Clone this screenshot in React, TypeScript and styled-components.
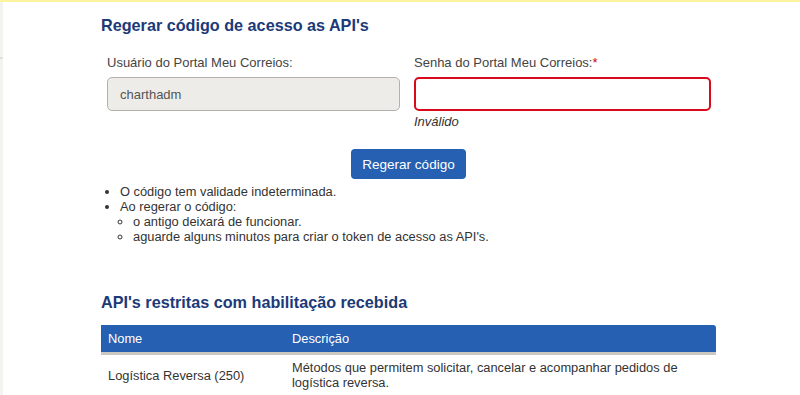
import styled, { createGlobalStyle } from "styled-components";

const GlobalStyle = createGlobalStyle`
  html, body {
    margin: 0;
    padding: 0;
    background: #ffffff;
    font-family: "Liberation Sans", Arial, sans-serif;
    color: #333333;
  }
`;

const Page = styled.div`
  display: flex;
  min-height: 395px;
  border-top: 2px solid #fcf3a0;
`;

const SideStrip = styled.aside`
  width: 3px;
  flex-shrink: 0;
  background: #f5f3ef;
  padding-top: 55px;
`;

const SideLine = styled.div`
  height: 2px;
  background: #e2dfda;
`;

const Content = styled.main`
  width: 615px;
  margin-left: 98px;
  padding-top: 12px;
`;

const SectionTitle = styled.h2`
  margin: 0;
  font-size: 16.2px;
  font-weight: bold;
  color: #1c3a78;
  line-height: 22px;
`;

const FormRow = styled.div`
  display: grid;
  grid-template-columns: 293px 297px;
  column-gap: 14px;
  padding: 0 6px;
  margin-top: 19px;
`;

const Field = styled.div`
  display: flex;
  flex-direction: column;
`;

const Label = styled.label`
  font-size: 13px;
  color: #444444;
  line-height: 16px;
  margin-bottom: 6px;
`;

const Required = styled.span`
  color: #d0021b;
`;

const Input = styled.div<{ $invalid?: boolean; $disabled?: boolean }>`
  box-sizing: border-box;
  height: 34px;
  border-radius: 5px;
  border: ${(p) => (p.$invalid ? "2px solid #d80a1c" : "1px solid #b4b1ac")};
  background: ${(p) => (p.$disabled ? "#eeece8" : "#ffffff")};
  padding: 0 12px;
  display: flex;
  align-items: center;
  font-size: 13px;
  color: #555555;
`;

const ErrorText = styled.span`
  font-size: 13px;
  font-style: italic;
  color: #333333;
  margin-top: 3px;
  line-height: 16px;
`;

const ButtonRow = styled.div`
  display: flex;
  justify-content: center;
  margin-top: 19px;
`;

const Button = styled.button`
  background: #2560b2;
  color: #ffffff;
  border: none;
  border-radius: 4px;
  height: 30px;
  padding: 0 11px;
  font-family: "Liberation Sans", Arial, sans-serif;
  font-size: 13.5px;
`;

const List = styled.ul<{ $nested?: boolean }>`
  margin: ${(p) => (p.$nested ? "0" : "5px 0 0 0")};
  padding-left: ${(p) => (p.$nested ? "13px" : "19px")};
  list-style-type: ${(p) => (p.$nested ? "circle" : "disc")};
  font-size: 12.85px;
  line-height: 15px;
  color: #333333;
`;

const Item = styled.li``;

const SecondTitle = styled(SectionTitle)`
  margin-top: 47px;
`;

const Table = styled.table`
  width: 100%;
  margin-top: 12px;
  border-collapse: collapse;
  font-size: 12.85px;
  color: #333333;
`;

const HeadCell = styled.th<{ $w?: string }>`
  background: #2560b2;
  color: #ffffff;
  font-weight: normal;
  text-align: left;
  height: 27px;
  padding: 0 7px;
  width: ${(p) => p.$w || "auto"};
  border-bottom: 3px solid #cbc8c2;
  &:last-child {
    border-top-right-radius: 3px;
  }
`;

const Cell = styled.td`
  padding: 5px 7px;
  line-height: 15px;
  vertical-align: middle;
`;

export default function App() {
  return (
    <>
      <GlobalStyle />
      <Page>
        <SideStrip>
          <SideLine />
        </SideStrip>
        <Content>
          <SectionTitle>Regerar código de acesso as API's</SectionTitle>
          <FormRow>
            <Field>
              <Label>Usuário do Portal Meu Correios:</Label>
              <Input $disabled>charthadm</Input>
            </Field>
            <Field>
              <Label>
                Senha do Portal Meu Correios:<Required>*</Required>
              </Label>
              <Input $invalid />
              <ErrorText>Inválido</ErrorText>
            </Field>
          </FormRow>
          <ButtonRow>
            <Button>Regerar código</Button>
          </ButtonRow>
          <List>
            <Item>O código tem validade indeterminada.</Item>
            <Item>
              Ao regerar o código:
              <List $nested>
                <Item>o antigo deixará de funcionar.</Item>
                <Item>aguarde alguns minutos para criar o token de acesso as API's.</Item>
              </List>
            </Item>
          </List>
          <SecondTitle>API's restritas com habilitação recebida</SecondTitle>
          <Table>
            <thead>
              <tr>
                <HeadCell $w="170px">Nome</HeadCell>
                <HeadCell>Descrição</HeadCell>
              </tr>
            </thead>
            <tbody>
              <tr>
                <Cell>Logística Reversa (250)</Cell>
                <Cell>
                  Métodos que permitem solicitar, cancelar e acompanhar pedidos de
                  <br />
                  logística reversa.
                </Cell>
              </tr>
            </tbody>
          </Table>
        </Content>
      </Page>
    </>
  );
}
